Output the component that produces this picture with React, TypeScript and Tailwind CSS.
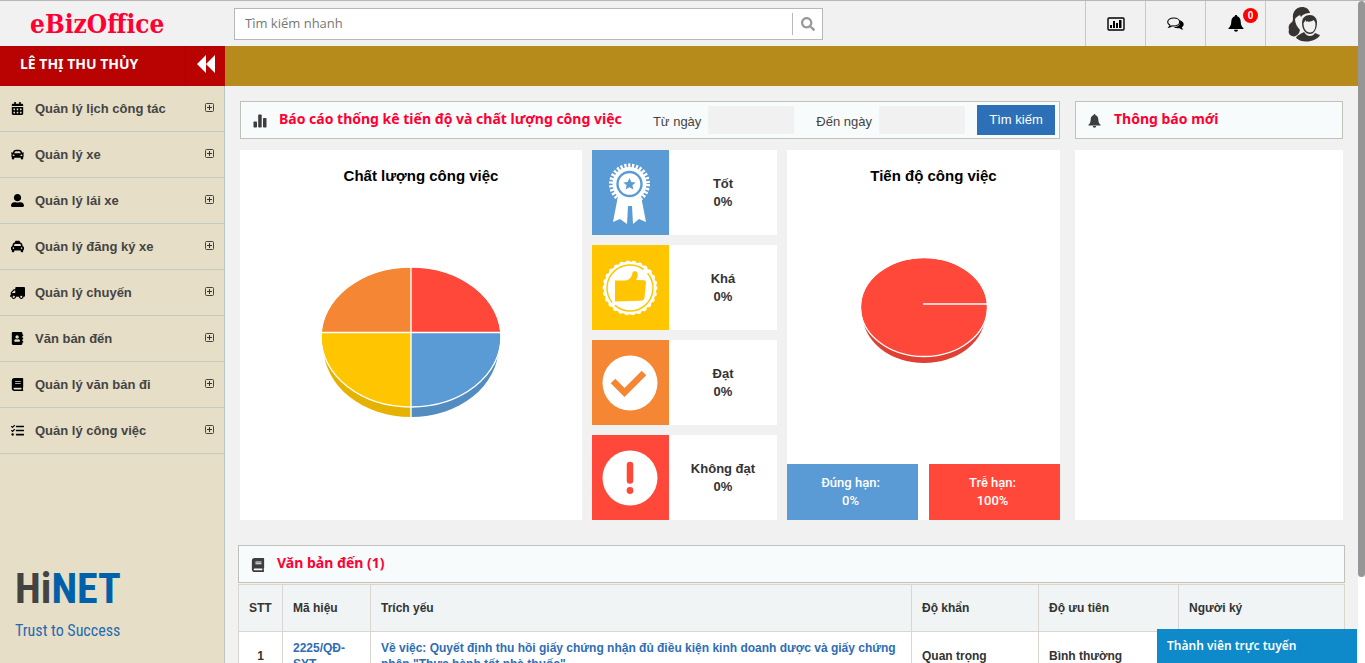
import { ReactNode } from "react";
import {
  FaAddressBook,
  FaBook,
  FaCalendarAlt,
  FaCar,
  FaSearch,
  FaTasks,
  FaTaxi,
  FaTruck,
  FaUserAlt,
} from "react-icons/fa";

const MENU = [
  { label: "Quản lý lịch công tác", icon: <FaCalendarAlt size={13} /> },
  { label: "Quản lý xe", icon: <FaCar size={13} /> },
  { label: "Quản lý lái xe", icon: <FaUserAlt size={13} /> },
  { label: "Quản lý đăng ký xe", icon: <FaTaxi size={13} /> },
  { label: "Quản lý chuyến", icon: <FaTruck size={16} className="-scale-x-100" /> },
  { label: "Văn bản đến", icon: <FaAddressBook size={13} /> },
  { label: "Quản lý văn bản đi", icon: <FaBook size={13} /> },
  { label: "Quản lý công việc", icon: <FaTasks size={13} /> },
];

const BellIcon = ({ className }: { className: string }) => (
  <svg viewBox="0 0 16 17" className={className} fill="currentColor" aria-hidden="true">
    <path d="M8 0c.8 0 1.200.5 1.200 1.300C11.600 2 12.600 4 12.700 6.500c.1 3.300 1 5.200 2.800 6.700v.8H.5v-.8c1.800-1.500 2.700-3.400 2.800-6.700C3.400 4 4.400 2 6.800 1.300 6.800.5 7.200 0 8 0Z" />
    <path d="M6 14.800h4c0 1.300-.9 2-2 2s-2-.7-2-2Z" />
  </svg>
);

const BarsIcon = () => (
  <svg viewBox="0 0 14 14" className="size-[14px]" fill="currentColor" aria-hidden="true">
    <rect x=".5" y="7.500" width="3.500" height="6" rx=".8" />
    <rect x="5.200" y=".5" width="3.500" height="13" rx=".8" />
    <rect x="10" y="4" width="3.500" height="9.500" rx=".8" />
  </svg>
);

const ExpandIcon = () => (
  <svg viewBox="0 0 9 9" className="mr-[10px] mb-[2px] ml-auto size-[9px]" aria-hidden="true">
    <rect x=".5" y=".5" width="8" height="8" rx="1" fill="none" stroke="#444" />
    <path d="M2 4.500h5M4.500 2v5" stroke="#333" />
  </svg>
);

const CommentsIcon = () => (
  <svg viewBox="0 0 17 14" className="h-[14px] w-[17px]" aria-hidden="true">
    <path d="M12.800 3.300c2.500.8 3.900 2.200 3.900 4 0 1.300-.7 2.300-1.900 3 .2.900.7 1.500 1.500 2.200-1.500.1-2.700-.4-3.600-1.300-2.300.3-4.500 0-6-.9 3.700-.1 7.600-2.500 6.100-7Z" />
    <path
      d="M6.700 1c3.400 0 6 1.700 6 4s-2.600 4-6 4c-.6 0-1.100 0-1.700-.1-.9.700-1.900 1.200-3 1.300.6-.6.9-1.200 1-1.900C1.500 7.500.7 6.300.7 5c0-2.300 2.600-4 6-4Z"
      fill="#f1f1f1"
      stroke="#000"
      strokeWidth="1.100"
    />
  </svg>
);

const MedalIcon = () => (
  <svg viewBox="0 0 60 66" className="h-[66px] w-[60px]" aria-hidden="true">
    <path d="m18 36-5 26 7-3 7 5 1-18h4l1 18 6-5 7 3-5-26Z" fill="#fff" />
    <circle cx="29.500" cy="24" r="17" fill="#fff" />
    <circle
      cx="29.500"
      cy="24"
      r="18"
      fill="none"
      stroke="#fff"
      strokeWidth="5"
      strokeDasharray="2.200 1.570"
    />
    <circle cx="29.500" cy="24" r="12" fill="none" stroke="#5b9bd5" strokeWidth="2.400" />
    <path
      d="m29.500 18 1.800 4 4.400.4-3.300 2.900 1 4.300-3.900-2.300-3.900 2.300 1-4.300-3.300-2.900 4.400-.4Z"
      fill="#5b9bd5"
    />
  </svg>
);

const ThumbIcon = () => (
  <svg viewBox="0 0 60 60" className="size-[60px]" aria-hidden="true">
    <circle cx="30" cy="30" r="26.200" fill="#fff" />
    <circle
      cx="30"
      cy="30"
      r="25"
      fill="none"
      stroke="#fff"
      strokeWidth="5"
      strokeLinecap="round"
      strokeDasharray="0 6.040"
    />
    <circle
      cx="30"
      cy="30"
      r="23"
      fill="none"
      stroke="#ffc600"
      strokeWidth="1.500"
      strokeDasharray="68 4 66 6.500"
      transform="rotate(-40 30 30)"
    />
    <path
      d="M15 22.500h11c4-1 6-4 6.500-8 1-2 4.500-1.500 5 .5.5 3-.5 5.500-1.500 7l8 .2c2 .3 2.400 2 1.800 3.500l-1.300 14c-.3 2-1.500 3-3.500 3L15 43.500Z"
      fill="#ffc600"
    />
  </svg>
);

const CheckIcon = () => (
  <svg viewBox="0 0 60 60" className="size-[60px]" aria-hidden="true">
    <circle cx="30" cy="30" r="27.500" fill="#fff" />
    <path d="m13 28 11.500 11.500L44 20" fill="none" stroke="#f58634" strokeWidth="6.400" />
  </svg>
);

const AlertIcon = () => (
  <svg viewBox="0 0 60 60" className="size-[60px]" aria-hidden="true">
    <circle cx="30" cy="30" r="27.500" fill="#fff" />
    <path d="M30 17v15.500" stroke="#ff4839" strokeWidth="6.500" strokeLinecap="round" />
    <circle cx="30" cy="42.500" r="3.400" fill="#ff4839" />
  </svg>
);

const UsersIcon = () => (
  <svg viewBox="0 0 32 36" className="h-9 w-8" aria-hidden="true">
    <path
      d="M5 13C4 6 8 1 14 1c4 0 7 2 8 6-4 0-7 1-9 4l-1-2c-2 1-4 2-5 4 0 4 2 8 5 11l-1 3c-2 3-5 4-7 3-3-1-4-4-3-6-1-3 0-6 2-7 1-1 2-2 2-4Z"
      fill="#363331"
    />
    <path d="M14 17c0-5 3-8 8-8 4 0 7 3 7 8 0 6-3 11-7 11-5 0-8-5-8-11Z" fill="#363331" />
    <path d="M15.500 17c1-1 1.500-2 2-3l1 2 1.500-1 .5 1c2-.5 4-1 5-2 1 1 2 2 2 4 0 5-2 8.500-5.500 8.500-4 0-6.500-4-6.500-9.500Z" fill="#f1f1f1" />
    <path d="M8 32c1-3 5-4 8-6 2 3 4 4 6 4s4-1 5-3c3 1 4 2 5 2-2 4-8 6.500-14 6.500-4 0-7-1-10-3.500Z" fill="#363331" />
  </svg>
);

const ReportIcon = () => (
  <svg viewBox="0 0 18 14" className="h-[14px] w-[18px]" aria-hidden="true">
    <rect x="1" y="1" width="16" height="12" rx="1" fill="none" stroke="#000" strokeWidth="1.400" />
    <path d="M3 8h2v3H3zM6 4h2v7H6zM9 6h2v5H9zM12 3h2.500v8H12z" />
  </svg>
);

const QualityPie = () => (
  <svg viewBox="0 0 180 152" className="h-[152px] w-[180px]" role="img" aria-label="Chất lượng công việc">
    <clipPath id="quality-top">
      <ellipse cx="90" cy="71" rx="89.500" ry="70" />
    </clipPath>
    <clipPath id="quality-side">
      <ellipse cx="90" cy="81" rx="87.500" ry="70" />
    </clipPath>
    <g clipPath="url(#quality-side)">
      <path d="M0 66h90v86H0z" fill="#e6b200" />
      <path d="M90 66h90v86H90z" fill="#528cc0" />
    </g>
    <g clipPath="url(#quality-top)">
      <path d="M0 0h90v66H0z" fill="#f58634" />
      <path d="M90 0h90v66H90z" fill="#ff4839" />
      <path d="M0 66h90v86H0z" fill="#ffc600" />
      <path d="M90 66h90v86H90z" fill="#5b9bd5" />
    </g>
    <ellipse cx="90" cy="71" rx="90" ry="70" fill="none" stroke="#fff" strokeWidth="1.400" />
    <path d="M0 66.500h180M90 0v152" fill="none" stroke="#fff" strokeWidth="1.400" />
  </svg>
);

const ProgressPie = () => (
  <svg viewBox="0 0 128 108" className="h-[108px] w-32" role="img" aria-label="Tiến độ công việc">
    <ellipse cx="64" cy="57" rx="61.500" ry="49" fill="#e04034" />
    <ellipse cx="64" cy="50" rx="63" ry="49" fill="#ff4839" />
    <ellipse cx="64" cy="50" rx="63.500" ry="49.500" fill="none" stroke="#fff" strokeWidth="1.300" />
    <path d="M63 47h64" fill="none" stroke="#fff" strokeWidth="1.400" />
  </svg>
);

const RATINGS = [
  { label: "Tốt", icon: <MedalIcon />, color: "bg-[#5b9bd5]" },
  { label: "Khá", icon: <ThumbIcon />, color: "bg-[#ffc600]" },
  { label: "Đạt", icon: <CheckIcon />, color: "bg-[#f58634]" },
  { label: "Không đạt", icon: <AlertIcon />, color: "bg-[#ff4839]" },
];

const PanelTitle = ({ icon, title, children }: { icon: ReactNode; title: string; children?: ReactNode }) => (
  <div className="flex h-[38px] items-center border border-[#c0c2ba] bg-[#f7fbfb] pr-1 pl-3">
    <span className="flex w-[26px] pt-[2px] text-[#3d3d3d]">{icon}</span>
    <h2 className="pb-[2px] font-['Noto_Sans',sans-serif] text-sm font-bold whitespace-nowrap text-[#ff0033]">
      {title}
    </h2>
    {children}
  </div>
);

const Header = () => (
  <header className="flex h-[46px] shrink-0 border-t border-[#b9b5b9] bg-[#f1f1f1]">
    <a
      href="#"
      className="w-[234px] shrink-0 pl-[30px] font-['DejaVu_Serif_Condensed','DejaVu_Serif',serif] text-[26px] leading-[46px] font-bold text-[#ff0033]"
    >
      eBizOffice
    </a>
    <form className="mt-[7px] flex h-8 w-[589px] border border-[#b5bab9] bg-white">
      <input
        type="text"
        aria-label="Tìm kiếm nhanh"
        placeholder="Tìm kiếm nhanh"
        className="min-w-0 flex-1 px-[10px] font-['Open_Sans',sans-serif] text-[13px] outline-none placeholder:text-[#777]"
      />
      <button
        type="button"
        aria-label="Tìm"
        className="my-1 flex w-[30px] items-center justify-center border-l border-[#b5bab9] text-[#999]"
      >
        <FaSearch size={14} />
      </button>
    </form>
    <nav className="ml-auto flex">
      <button type="button" aria-label="Báo cáo" className="flex w-[60px] items-center justify-center border-l border-[#c8c8c8]">
        <ReportIcon />
      </button>
      <button type="button" aria-label="Tin nhắn" className="flex w-[60px] items-center justify-center border-l border-[#c8c8c8]">
        <CommentsIcon />
      </button>
      <button type="button" aria-label="Thông báo" className="relative flex w-[60px] items-center justify-center border-l border-[#c8c8c8]">
        <BellIcon className="h-[17px] w-4" />
        <span className="absolute top-[7px] right-[7px] size-[15px] rounded-full bg-[#ff0000] text-center text-[10px] leading-[15px] font-bold text-white">
          0
        </span>
      </button>
      <button type="button" aria-label="Tài khoản" className="flex w-[93px] items-center border-l border-[#c8c8c8] pl-[22px]">
        <UsersIcon />
      </button>
    </nav>
  </header>
);

const Sidebar = () => (
  <aside className="flex w-[225px] shrink-0 flex-col bg-[#e6dec6]">
    <div className="flex h-10 shrink-0 bg-[#b90202] text-white">
      <p className="flex-1 pl-5 font-['Noto_Sans',sans-serif] text-sm leading-9 font-bold">LÊ THỊ THU THỦY</p>
      <button
        type="button"
        aria-label="Thu gọn"
        className="flex w-10 items-center justify-center border-l border-[#a80000] pb-1"
      >
        <svg viewBox="0 0 18 18" className="size-[18px]" fill="currentColor" aria-hidden="true">
          <path d="M9 0v18L0 9ZM18 0v18L9 9Z" />
        </svg>
      </button>
    </div>
    <div className="flex flex-1 flex-col border-r border-[#b9c6c4]">
      <ul>
        {MENU.map((item) => (
          <li key={item.label} className="border-b border-[#c6cbbf]">
            <a href="#" className="flex h-[45px] items-center pl-[10px] text-[13px] font-bold text-[#444]">
              <span className="flex w-[25px] text-black">
                <span className="flex w-[15px] justify-center">{item.icon}</span>
              </span>
              {item.label}
              <ExpandIcon />
            </a>
          </li>
        ))}
      </ul>
      <div className="mt-auto mb-5 pl-[15px] font-['Roboto_Condensed','Liberation_Sans_Narrow','Liberation_Sans',sans-serif] whitespace-nowrap">
        <p className="text-[42px] leading-[60px] font-bold text-[#0060a9]">
          <span className="text-[#434343]">Hi</span>NET
        </p>
        <p className="text-base leading-6 text-[#1f6cb0]">Trust to Success</p>
      </div>
    </div>
  </aside>
);

const Dashboard = () => (
  <section className="grid grid-cols-[820fr_268fr] gap-x-[15px] px-[15px] pt-[15px]">
    <div>
      <PanelTitle icon={<BarsIcon />} title="Báo cáo thống kê tiến độ và chất lượng công việc">
        <form className="ml-auto flex items-center text-[13px] text-[#444]">
          <label htmlFor="from" className="mr-[7px] pt-1">
            Từ ngày
          </label>
          <input id="from" type="text" className="mr-[22px] h-7 w-[86px] bg-[#f1f1f1] px-2" />
          <label htmlFor="to" className="mr-[7px] pt-1">
            Đến ngày
          </label>
          <input id="to" type="text" className="mr-3 h-7 w-[86px] bg-[#f1f1f1] px-2" />
          <button type="button" className="h-[30px] w-[78px] bg-[#2e70b8] text-white">
            Tìm kiếm
          </button>
        </form>
      </PanelTitle>
      <div className="mt-[11px] grid grid-cols-[342fr_185fr_273fr] gap-x-[10px]">
        <div className="flex flex-col items-center bg-white pt-4">
          <h3 className="pl-5 text-[15px] leading-5 font-bold text-black">Chất lượng công việc</h3>
          <div className="mt-20">
            <QualityPie />
          </div>
        </div>
        <ul className="flex flex-col gap-[10px]">
          {RATINGS.map((rating) => (
            <li key={rating.label} className="flex h-[85px] bg-white">
              <span className={`flex w-[77px] items-center justify-center pr-px ${rating.color}`}>{rating.icon}</span>
              <p className="flex flex-1 flex-col items-center justify-center text-[13px] leading-[18px] font-bold text-[#333]">
                <span>{rating.label}</span>
                <span>0%</span>
              </p>
            </li>
          ))}
        </ul>
        <div className="flex flex-col items-center bg-white pt-4">
          <h3 className="pl-5 text-[15px] leading-5 font-bold text-black">Tiến độ công việc</h3>
          <div className="mt-[71px]">
            <ProgressPie />
          </div>
          <div className="mt-auto grid w-full grid-cols-2 gap-[11px] text-center font-['Roboto',sans-serif] text-[13px] leading-[18px] font-medium text-white">
            <p className="bg-[#5b9bd5] py-[10px] pr-1">
              Đúng hạn:
              <br />
              0%
            </p>
            <p className="bg-[#ff4839] py-[10px] pr-1">
              Trễ hạn:
              <br />
              100%
            </p>
          </div>
        </div>
      </div>
    </div>
    <div className="flex flex-col">
      <PanelTitle icon={<BellIcon className="h-[14px] w-[13px]" />} title="Thông báo mới" />
      <div className="mt-[11px] flex-1 bg-white" />
    </div>
  </section>
);

const Documents = () => (
  <section className="mt-[25px] px-[13px]">
    <PanelTitle icon={<FaBook size={14} />} title="Văn bản đến (1)" />
    <table className="mt-[1px] w-full table-fixed border-collapse text-left text-xs text-[#333]">
      <thead>
        <tr className="h-[47px] bg-[#f0f4f4] [&>th]:border [&>th]:border-[#d9d6d0] [&>th]:px-[10px]">
          <th className="w-[44px]">STT</th>
          <th className="w-[88px]">Mã hiệu</th>
          <th>Trích yếu</th>
          <th className="w-[127px]">Độ khẩn</th>
          <th className="w-[140px]">Độ ưu tiên</th>
          <th className="w-[166px]">Người ký</th>
        </tr>
      </thead>
      <tbody>
        <tr className="bg-white font-bold [&>td]:border [&>td]:border-[#d9d6d0] [&>td]:px-[10px] [&>td]:py-2 [&>td]:leading-4">
          <td className="text-center">1</td>
          <td>
            <a href="#" className="text-[#2e6db4]">
              2225/QĐ-SYT
            </a>
          </td>
          <td>
            <a href="#" className="text-[#2e6db4]">
              Về việc: Quyết định thu hồi giấy chứng nhận đủ điều kiện kinh doanh dược và giấy chứng nhận "Thực hành tốt
              nhà thuốc"
            </a>
          </td>
          <td>Quan trọng</td>
          <td>Bình thường</td>
          <td />
        </tr>
      </tbody>
    </table>
  </section>
);

export default function App() {
  return (
    <div className="flex h-screen overflow-hidden bg-white font-['Liberation_Sans',Arial,sans-serif]">
      <div className="flex min-w-0 flex-1 flex-col">
        <Header />
        <div className="flex min-h-0 flex-1">
          <Sidebar />
          <main className="min-w-0 flex-1 overflow-hidden bg-[#f1f1f1]">
            <div className="h-10 bg-[#b68b1b]" />
            <Dashboard />
            <Documents />
          </main>
        </div>
      </div>
      <div className="w-[7px] shrink-0 border-t border-[#b9b5b9]">
        <div className="h-[87%] rounded-full bg-[#969696]" />
      </div>
      <button
        type="button"
        className="fixed right-2 bottom-0 h-[34px] w-[200px] bg-[#0e8acb] px-[10px] text-left font-['Noto_Sans',sans-serif] text-xs font-semibold text-white"
      >
        Thành viên trực tuyến
      </button>
    </div>
  );
}
